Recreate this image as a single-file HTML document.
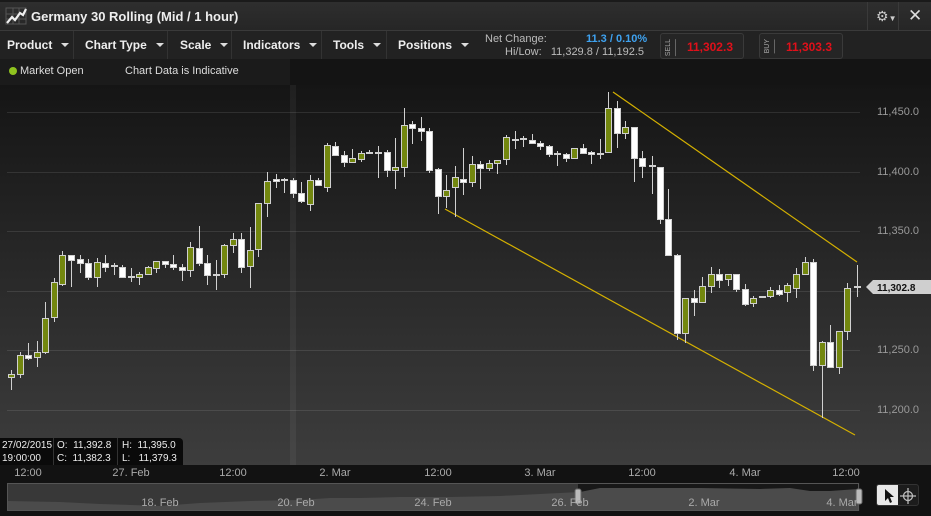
<!DOCTYPE html>
<html><head><meta charset="utf-8"><style>
*{margin:0;padding:0;box-sizing:border-box}
body{width:931px;height:516px;overflow:hidden;background:#111;font-family:"Liberation Sans",sans-serif;position:relative}
.abs{position:absolute}
#title{left:0;top:0;width:931px;height:31px;background:linear-gradient(#2e2e2e,#262626);border-top:2px solid #1a1a1a;border-bottom:1px solid #3a3a3a}
#title span{position:absolute;left:31px;top:7px;color:#eee;font-size:13px;font-weight:bold}
#tb{left:0;top:31px;width:931px;height:28px;background:#222}
.m{position:absolute;top:7px;color:#eee;font-size:12px;font-weight:bold}
.m:after{content:"";display:inline-block;margin-left:9px;border-left:4px solid transparent;border-right:4px solid transparent;border-top:4px solid #ddd;vertical-align:2px}
.sep{position:absolute;top:0;width:1px;height:28px;background:#333}
#st{left:0;top:59px;width:931px;height:26px;background:#141414}
.btn{position:absolute;top:33px;width:84px;height:26px;background:#252525;border:1px solid #3a3a3a;border-radius:3px}
.btn i{position:absolute;left:4px;top:5px;font-size:7px;color:#aaa;writing-mode:vertical-rl;transform:rotate(180deg);font-style:normal;border-left:1px solid #666;padding-left:3px}
.btn b{position:absolute;right:10px;top:6px;color:#e0101a;font-size:12px}
.ax{position:absolute;left:877px;color:#999;font-size:11px}
.xl{position:absolute;top:467px;color:#aaa;font-size:11px;transform:translateX(-50%)}
.nl{position:absolute;top:497px;color:#aaa;font-size:11px;transform:translateX(-50%)}
</style></head><body>
<div id="title" class="abs">
<svg class="abs" style="left:5px;top:5px" width="22" height="18"><g stroke="#555" stroke-width="1"><path d="M1 1H21V17H1ZM8 1V17M14 1V17M1 7H21M1 12H21" fill="none"/></g><path d="M2 16L7 10L10 13L15 6L18 8L21 2" stroke="#eee" stroke-width="2.2" fill="none"/></svg>
<span>Germany 30 Rolling (Mid / 1 hour)</span>
<div class="abs" style="left:867px;top:0;width:1px;height:29px;background:#3a3a3a"></div>
<div class="abs" style="left:898px;top:0;width:1px;height:29px;background:#3a3a3a"></div>
<div class="abs" style="left:876px;top:6px;color:#ccc;font-size:14px">⚙<span style="position:static;font-size:8px;color:#ccc">▼</span></div>
<div class="abs" style="left:908px;top:4px;color:#ddd;font-size:17px">✕</div>
</div>
<div id="tb" class="abs">
<div class="m" style="left:7px">Product</div><div class="sep" style="left:73px"></div>
<div class="m" style="left:85px">Chart Type</div><div class="sep" style="left:167px"></div>
<div class="m" style="left:180px">Scale</div><div class="sep" style="left:231px"></div>
<div class="m" style="left:243px">Indicators</div><div class="sep" style="left:321px"></div>
<div class="m" style="left:333px">Tools</div><div class="sep" style="left:386px"></div>
<div class="m" style="left:398px">Positions</div>
<div class="abs" style="left:485px;top:2px;color:#bbb;font-size:11px">Net Change:</div>
<div class="abs" style="left:586px;top:2px;color:#3ea2f0;font-size:11px;font-weight:bold">11.3 / 0.10%</div>
<div class="abs" style="left:505px;top:15px;color:#bbb;font-size:11px">Hi/Low:&nbsp;&nbsp;&nbsp;11,329.8 / 11,192.5</div>
</div>
<div class="btn" style="left:660px"><i>SELL</i><b>11,302.3</b></div>
<div class="btn" style="left:759px"><i>BUY</i><b>11,303.3</b></div>
<div id="st" class="abs">
<div class="abs" style="left:0;top:0;width:290px;height:26px;background:#1b1b1b"></div>
<div class="abs" style="left:9px;top:8px;width:8px;height:8px;border-radius:50%;background:#8fc31f"></div>
<div class="abs" style="left:20px;top:6px;color:#ddd;font-size:11px">Market Open</div>
<div class="abs" style="left:125px;top:6px;color:#ddd;font-size:11px">Chart Data is Indicative</div>
</div>
<svg class="abs" style="left:0;top:85px" width="931" height="380" viewBox="0 85 931 380">
<defs><linearGradient id="bg" x1="0" y1="0" x2="0" y2="1"><stop offset="0" stop-color="#151515"/><stop offset="1" stop-color="#3d3d3d"/></linearGradient></defs>
<rect x="0" y="85" width="931" height="380" fill="url(#bg)"/>
<rect x="290" y="85" width="6" height="380" fill="#fff" opacity=".05"/>
<g stroke="#fff" stroke-opacity=".1"><path d="M7 112.5H860M7 172.5H860M7 231.5H860M7 291.5H860M7 350.5H860M7 410.5H860"/></g>
<path d="M613 92L857 262M445 209L855 435" stroke="#d4b000" stroke-width="1.2"/>
<path stroke="#d0d0d0" stroke-width="1" d="M11.5 370V390M20.5 352V378M28.5 343V360M37.5 341V367M45.5 302V354M54.5 278V322M62.5 251V286M71.5 255V287M80.5 255V273M88.5 259V280M97.5 258V287M105.5 255V272M114.5 263V275M122.5 265V277M131.5 268V282M139.5 272V285M148.5 266V274M156.5 261V273M165.5 261V268M173.5 255V270M182.5 264V281M190.5 242V277M199.5 226V266M207.5 255V285M216.5 260V290M224.5 244V278M233.5 233V253M241.5 233V273M250.5 227V288M258.5 203V257M267.5 172V217M276.5 174V188M284.5 178V193M293.5 178V198M301.5 182V203M310.5 175V211M318.5 178V185M327.5 143V192M335.5 142V155M344.5 151V167M352.5 149V162M361.5 151V162M369.5 150V154M378.5 146V178M387.5 150V177M395.5 138V189M404.5 108V177M412.5 121V144M421.5 117V141M429.5 128V173M438.5 168V214M446.5 175V208M455.5 166V217M463.5 148V195M472.5 156V187M480.5 161V189M489.5 160V171M497.5 160V174M506.5 135V165M515.5 131V149M523.5 136V147M532.5 134V143M540.5 141V150M549.5 145V157M557.5 151V166M566.5 153V162M574.5 148V158M583.5 144V153M591.5 151V164M600.5 139V159M608.5 92V152M617.5 101V148M625.5 121V139M634.5 127V182M642.5 151V178M652.5 156V194M660.5 167V224M668.5 189V255M677.5 254V340M685.5 298V343M694.5 290V316M702.5 277V302M711.5 267V293M719.5 269V288M728.5 274V286M736.5 274V292M745.5 284V306M753.5 296V307M762.5 296V298M770.5 287V298M779.5 285V296M787.5 283V302M796.5 268V298M805.5 257V274M813.5 259V371M822.5 341V418M830.5 325V367M839.5 331V374M847.5 283V340M857.5 265V297"/>
<g stroke="#d0d0d0" stroke-width="1" fill="#73870f">
<rect x="8.5" y="374.5" width="6" height="3"/><rect x="17.5" y="355.5" width="6" height="19"/><rect x="34.5" y="352.5" width="6" height="5"/><rect x="42.5" y="318.5" width="6" height="34"/><rect x="51.5" y="282.5" width="6" height="35"/><rect x="59.5" y="255.5" width="6" height="29"/><rect x="94.5" y="262.5" width="6" height="15"/><rect x="136.5" y="274.5" width="6" height="3"/><rect x="145.5" y="267.5" width="6" height="7"/><rect x="153.5" y="261.5" width="6" height="7"/><rect x="187.5" y="247.5" width="6" height="23"/><rect x="221.5" y="245.5" width="6" height="29"/><rect x="230.5" y="239.5" width="6" height="6"/><rect x="247.5" y="250.5" width="6" height="16"/><rect x="255.5" y="203.5" width="6" height="46"/><rect x="264.5" y="181.5" width="6" height="22"/><rect x="307.5" y="180.5" width="6" height="24"/><rect x="324.5" y="145.5" width="6" height="42"/><rect x="349.5" y="158.5" width="6" height="4"/><rect x="358.5" y="153.5" width="6" height="6"/><rect x="392.5" y="167.5" width="6" height="3"/><rect x="401.5" y="125.5" width="6" height="42"/><rect x="443.5" y="190.5" width="6" height="6"/><rect x="452.5" y="177.5" width="6" height="10"/><rect x="469.5" y="164.5" width="6" height="18"/><rect x="486.5" y="163.5" width="6" height="5"/><rect x="494.5" y="160.5" width="6" height="3"/><rect x="503.5" y="137.5" width="6" height="22"/><rect x="571.5" y="148.5" width="6" height="10"/><rect x="605.5" y="108.5" width="6" height="44"/><rect x="622.5" y="127.5" width="6" height="6"/><rect x="682.5" y="298.5" width="6" height="35"/><rect x="699.5" y="286.5" width="6" height="16"/><rect x="708.5" y="274.5" width="6" height="12"/><rect x="725.5" y="274.5" width="6" height="5"/><rect x="750.5" y="298.5" width="6" height="5"/><rect x="767.5" y="290.5" width="6" height="6"/><rect x="784.5" y="285.5" width="6" height="7"/><rect x="793.5" y="274.5" width="6" height="14"/><rect x="802.5" y="262.5" width="6" height="12"/><rect x="819.5" y="342.5" width="6" height="23"/><rect x="836.5" y="331.5" width="6" height="36"/><rect x="844.5" y="288.5" width="6" height="43"/>
</g>
<g stroke="#d0d0d0" stroke-width="1" fill="#fff">
<rect x="25.5" y="355.5" width="6" height="3"/><rect x="68.5" y="255.5" width="6" height="5"/><rect x="77.5" y="259.5" width="6" height="4"/><rect x="85.5" y="263.5" width="6" height="14"/><rect x="102.5" y="263.5" width="6" height="4"/><rect x="111.5" y="265.5" width="6" height="1"/><rect x="119.5" y="267.5" width="6" height="10"/><rect x="128.5" y="276.5" width="6" height="1"/><rect x="162.5" y="261.5" width="6" height="3"/><rect x="170.5" y="264.5" width="6" height="3"/><rect x="179.5" y="267.5" width="6" height="3"/><rect x="196.5" y="248.5" width="6" height="15"/><rect x="204.5" y="263.5" width="6" height="12"/><rect x="213.5" y="274.5" width="6" height="1"/><rect x="238.5" y="239.5" width="6" height="28"/><rect x="273.5" y="179.5" width="6" height="2"/><rect x="281.5" y="179.5" width="6" height="1"/><rect x="290.5" y="180.5" width="6" height="13"/><rect x="298.5" y="193.5" width="6" height="8"/><rect x="315.5" y="180.5" width="6" height="5"/><rect x="332.5" y="146.5" width="6" height="9"/><rect x="341.5" y="155.5" width="6" height="7"/><rect x="366.5" y="152.5" width="6" height="1"/><rect x="375.5" y="152.5" width="6" height="1"/><rect x="384.5" y="152.5" width="6" height="18"/><rect x="409.5" y="124.5" width="6" height="4"/><rect x="418.5" y="128.5" width="6" height="3"/><rect x="426.5" y="131.5" width="6" height="39"/><rect x="435.5" y="169.5" width="6" height="27"/><rect x="460.5" y="179.5" width="6" height="3"/><rect x="477.5" y="164.5" width="6" height="4"/><rect x="512.5" y="139.5" width="6" height="1"/><rect x="520.5" y="138.5" width="6" height="1"/><rect x="529.5" y="140.5" width="6" height="3"/><rect x="537.5" y="143.5" width="6" height="3"/><rect x="546.5" y="146.5" width="6" height="8"/><rect x="554.5" y="153.5" width="6" height="1"/><rect x="563.5" y="154.5" width="6" height="4"/><rect x="580.5" y="148.5" width="6" height="5"/><rect x="588.5" y="152.5" width="6" height="2"/><rect x="597.5" y="153.5" width="6" height="1"/><rect x="614.5" y="108.5" width="6" height="25"/><rect x="631.5" y="127.5" width="6" height="31"/><rect x="639.5" y="158.5" width="6" height="8"/><rect x="649.5" y="165.5" width="6" height="1"/><rect x="657.5" y="167.5" width="6" height="52"/><rect x="665.5" y="219.5" width="6" height="36"/><rect x="674.5" y="255.5" width="6" height="78"/><rect x="691.5" y="298.5" width="6" height="4"/><rect x="716.5" y="274.5" width="6" height="6"/><rect x="733.5" y="274.5" width="6" height="15"/><rect x="742.5" y="289.5" width="6" height="15"/><rect x="759.5" y="296.5" width="6" height="1"/><rect x="776.5" y="290.5" width="6" height="4"/><rect x="810.5" y="262.5" width="6" height="103"/><rect x="827.5" y="342.5" width="6" height="25"/><rect x="854.5" y="286.5" width="6" height="1"/>
</g>
<path d="M866 287L873 280H931V294H873Z" fill="#cfcfcf"/>
<text x="877" y="291" font-family="Liberation Sans" font-size="10" font-weight="bold" fill="#111">11,302.8</text>
</svg>
<div class="ax" style="top:106px">11,450.0</div>
<div class="ax" style="top:166px">11,400.0</div>
<div class="ax" style="top:225px">11,350.0</div>
<div class="ax" style="top:344px">11,250.0</div>
<div class="ax" style="top:404px">11,200.0</div>
<div class="abs" style="left:0;top:438px;width:183px;height:27px;background:#0a0a0a;border-radius:0 4px 0 0;color:#eee;font-size:10px;line-height:13px">
<div class="abs" style="left:2px;top:1px">27/02/2015<br>19:00:00</div>
<div class="abs" style="left:53px;top:0;width:1px;height:27px;background:#333"></div>
<div class="abs" style="left:57px;top:1px">O:&nbsp; 11,392.8<br>C:&nbsp; 11,382.3</div>
<div class="abs" style="left:117px;top:0;width:1px;height:27px;background:#333"></div>
<div class="abs" style="left:122px;top:1px">H:&nbsp; 11,395.0<br>L:&nbsp;&nbsp; 11,379.3</div>
</div>
<div class="abs" style="left:0;top:465px;width:931px;height:51px;background:#121212"></div>
<div class="xl" style="left:28px">12:00</div><div class="xl" style="left:131px">27. Feb</div><div class="xl" style="left:233px">12:00</div><div class="xl" style="left:335px">2. Mar</div><div class="xl" style="left:438px">12:00</div><div class="xl" style="left:540px">3. Mar</div><div class="xl" style="left:642px">12:00</div><div class="xl" style="left:745px">4. Mar</div><div class="xl" style="left:846px">12:00</div>
<svg class="abs" style="left:0;top:483px" width="870" height="30">
<rect x="7" y="0" width="571" height="28" fill="#383838"/>
<rect x="578" y="0" width="282" height="28" fill="#181818"/>
<path d="M7 18L60 19L100 21L160 23L200 20L250 18L300 17L330 15L360 15L400 14L450 14L500 13L540 11L580 9L600 5L640 5L700 5L760 6L790 5L810 8L830 8L858 6V28H7Z" fill="#4b4b4b"/>
<rect x="7.5" y="0.5" width="851" height="27" fill="none" stroke="#555"/>
<rect x="575" y="6" width="6" height="15" rx="2" fill="#bbb" stroke="#666"/>
<rect x="856" y="6" width="6" height="15" rx="2" fill="#bbb" stroke="#666"/>
</svg>
<div class="nl" style="left:160px">18. Feb</div><div class="nl" style="left:296px">20. Feb</div><div class="nl" style="left:433px">24. Feb</div><div class="nl" style="left:570px">26. Feb</div><div class="nl" style="left:704px">2. Mar</div><div class="nl" style="left:842px">4. Mar</div>
<div class="abs" style="left:876px;top:484px;width:43px;height:22px;border:1px solid #333;border-radius:3px;background:#1c1c1c;overflow:hidden">
<div class="abs" style="left:0;top:0;width:21px;height:22px;background:#e8e8e8"></div>
<svg class="abs" style="left:0;top:0" width="43" height="22"><path d="M8 4L8 16L11 13L13 18L15 17L13 12L17 12Z" fill="#111"/><circle cx="31" cy="11" r="4.5" fill="none" stroke="#bbb" stroke-width="1.3"/><path d="M31 3V19M23 11H39" stroke="#bbb" stroke-width="1.3"/></svg>
</div>
</body></html>
